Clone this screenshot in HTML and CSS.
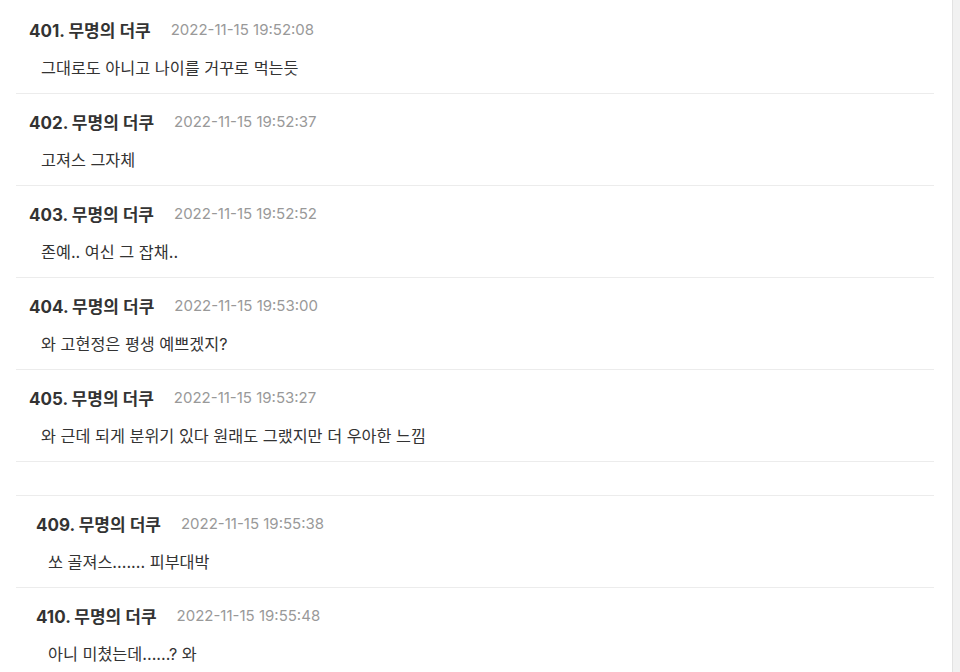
FILE: index.html
```html
<!DOCTYPE html>
<html lang="ko">
  <head>
    <meta charset="UTF-8" />
    <meta name="viewport" content="width=device-width, initial-scale=1.0" />
    <title>댓글</title>
    <link rel="stylesheet" href="styles.css">
  </head>
  <body>
    <div class="page">
      <div class="content">
        <ul class="comments">
          <li class="comment">
            <div class="comment-head"><span class="nick">401. 무명의 더쿠</span><span class="date">2022-11-15 19:52:08</span></div>
            <p class="comment-text">그대로도 아니고 나이를 거꾸로 먹는듯</p>
          </li>
          <li class="comment">
            <div class="comment-head"><span class="nick">402. 무명의 더쿠</span><span class="date">2022-11-15 19:52:37</span></div>
            <p class="comment-text">고져스 그자체</p>
          </li>
          <li class="comment">
            <div class="comment-head"><span class="nick">403. 무명의 더쿠</span><span class="date">2022-11-15 19:52:52</span></div>
            <p class="comment-text">존예.. 여신 그 잡채..</p>
          </li>
          <li class="comment">
            <div class="comment-head"><span class="nick">404. 무명의 더쿠</span><span class="date">2022-11-15 19:53:00</span></div>
            <p class="comment-text">와 고현정은 평생 예쁘겠지?</p>
          </li>
          <li class="comment">
            <div class="comment-head"><span class="nick">405. 무명의 더쿠</span><span class="date">2022-11-15 19:53:27</span></div>
            <p class="comment-text">와 근데 되게 분위기 있다 원래도 그랬지만 더 우아한 느낌</p>
          </li>
        </ul>

        <ul class="comments comments-second">
          <li class="comment">
            <div class="comment-head"><span class="nick">409. 무명의 더쿠</span><span class="date">2022-11-15 19:55:38</span></div>
            <p class="comment-text">쏘 골져스....... 피부대박</p>
          </li>
          <li class="comment">
            <div class="comment-head"><span class="nick">410. 무명의 더쿠</span><span class="date">2022-11-15 19:55:48</span></div>
            <p class="comment-text">아니 미쳤는데......? 와</p>
          </li>
        </ul>
      </div>
      <div class="scroll-track"></div>
    </div>
  </body>
</html>
```

FILE: styles.css
```css
body {
  margin: 0;
  background: #fff;
  font-family: Inter, "Noto Sans CJK KR", sans-serif;
  color: #333;
}
.page {
  display: flex;
  height: 672px;
  overflow: hidden;
}
.content {
  flex: 1;
  padding-top: 2px;
}
.scroll-track {
  width: 7px;
  background: #f1f1f1;
  border-left: 1px solid #e2e2e2;
}
.comments {
  list-style: none;
  margin: 0 18px 0 16px;
  padding: 0;
}
.comments-second {
  margin-top: 33px;
  border-top: 1px solid #ececec;
}
.comment {
  padding: 16px 0 14px 13px;
  border-bottom: 1px solid #ececec;
}
.comments-second .comment {
  padding-left: 20px;
}
.comment-head {
  display: flex;
  align-items: center;
  height: 22px;
}
.nick {
  font-size: 17px;
  font-weight: bold;
  color: #333;
}
.date {
  margin-left: 20px;
  font-size: 15px;
  color: #999;
}
.comment-text {
  margin: 17px 0 0 12px;
  font-size: 16.25px;
  line-height: 22px;
  color: #333;
}
```
